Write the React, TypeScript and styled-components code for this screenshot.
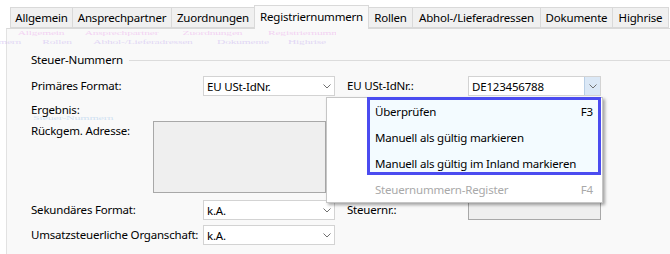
import styled, { createGlobalStyle } from 'styled-components'

const GlobalStyle = createGlobalStyle`
  html, body {
    margin: 0;
    padding: 0;
    background: #ffffff;
  }
  body {
    font-family: 'Noto Sans', 'Segoe UI', sans-serif;
    font-size: 11.5px;
    letter-spacing: -0.2px;
    color: #000000;
  }
`

const Window = styled.div`
  position: relative;
  width: 670px;
  height: 254px;
  overflow: hidden;
  background: #ffffff;
`

const TabStrip = styled.div`
  display: flex;
  align-items: flex-end;
  height: 28px;
  padding-left: 10px;
  box-sizing: border-box;
`

const Tab = styled.div<{ $width: number; $active?: boolean }>`
  position: relative;
  z-index: ${(p) => (p.$active ? 2 : 1)};
  width: ${(p) => p.$width}px;
  height: ${(p) => (p.$active ? 24 : 21)}px;
  margin-left: -1px;
  margin-bottom: ${(p) => (p.$active ? -1 : 0)}px;
  padding-bottom: ${(p) => (p.$active ? 3 : 0)}px;
  box-sizing: border-box;
  display: flex;
  align-items: center;
  justify-content: center;
  white-space: nowrap;
  background: ${(p) => (p.$active ? '#f9f9f9' : '#f0f0f0')};
  border: 1px solid #d9d9d9;
  border-bottom: ${(p) => (p.$active ? 'none' : '1px solid #d9d9d9')};
  &:first-child {
    margin-left: 0;
  }
`

const GhostRow = styled.div<{ $top: number; $shift: number; $color: string }>`
  position: absolute;
  top: ${(p) => p.$top}px;
  left: 0;
  width: 336px;
  height: 12px;
  overflow: hidden;
  pointer-events: none;
  & > div {
    display: flex;
    margin-left: ${(p) => p.$shift}px;
    padding-left: 10px;
    transform: scaleY(0.55);
    transform-origin: top left;
    color: ${(p) => p.$color};
    font-family: 'Liberation Serif', serif;
  }
`

const GhostLabel = styled.span<{ $width: number }>`
  width: ${(p) => p.$width - 1}px;
  flex: none;
  text-align: center;
  white-space: nowrap;
`

const Panel = styled.div`
  margin-left: 6px;
  height: 226px;
  box-sizing: border-box;
  background: #f9f9f9;
  border-top: 1px solid #d9d9d9;
  border-left: 1px solid #e2e2e2;
  padding: 22px 0 0 24px;
`

const GroupHeader = styled.div`
  display: flex;
  align-items: center;
  height: 16px;
  gap: 6px;
  &::after {
    content: '';
    flex: 1;
    height: 1px;
    margin-top: 3px;
    background: #dcdcdc;
  }
`

const FieldRow = styled.div<{ $top: number }>`
  display: grid;
  grid-template-columns: 172px 132px 133px 133px;
  align-items: center;
  height: 20px;
  margin-top: ${(p) => p.$top}px;
`

const Label = styled.div<{ $indent?: number }>`
  padding-left: ${(p) => p.$indent ?? 0}px;
  white-space: nowrap;
  line-height: 16px;
`

const Combo = styled.div`
  display: flex;
  align-items: stretch;
  height: 20px;
  box-sizing: border-box;
  background: #ffffff;
  border: 1px solid #d3d3d3;
`

const ComboText = styled.div`
  flex: 1;
  padding-left: 3px;
  display: flex;
  align-items: center;
  white-space: nowrap;
`

const ComboButton = styled.div<{ $hot?: boolean }>`
  width: 15px;
  display: flex;
  align-items: center;
  justify-content: center;
  background: ${(p) => (p.$hot ? '#dbe8f6' : 'transparent')};
  border-left: 1px solid ${(p) => (p.$hot ? '#b9cfe6' : 'transparent')};
`

const ReadonlyBox = styled.div<{ $width: number; $height: number }>`
  width: ${(p) => p.$width}px;
  height: ${(p) => p.$height}px;
  box-sizing: border-box;
  background: #efefef;
  border: 1px solid #a8a8a8;
`

const ResultRow = styled.div`
  margin-top: 6px;
  height: 16px;
  display: flex;
  align-items: center;
`

const AddressRow = styled.div`
  display: grid;
  grid-template-columns: 122px 173px;
  margin-top: 3px;
  & > ${Label} {
    padding-top: 2px;
  }
`

const GhostText = styled.div`
  position: absolute;
  top: 114px;
  left: 33px;
  font-family: 'Liberation Serif', serif;
  font-size: 12px;
  transform: scaleY(0.5);
  transform-origin: top left;
  color: rgba(190, 215, 240, 0.7);
  pointer-events: none;
`

const Menu = styled.div`
  position: absolute;
  left: 326px;
  top: 97px;
  width: 277px;
  height: 106px;
  box-sizing: border-box;
  background: #ffffff;
  border: 1px solid #c6c6c6;
  box-shadow: 2px 2px 3px rgba(0, 0, 0, 0.35);
`

const MenuItem = styled.div<{ $disabled?: boolean }>`
  position: relative;
  display: flex;
  align-items: center;
  justify-content: space-between;
  height: 26px;
  padding: 0 9px 0 48px;
  color: ${(p) => (p.$disabled ? '#a9a9a9' : '#000000')};
  white-space: nowrap;
`

const Highlight = styled.div`
  position: absolute;
  left: 40px;
  top: -1px;
  width: 234px;
  height: 78px;
  box-sizing: border-box;
  border: 3px solid #4b4cf0;
  pointer-events: none;
`

const HighlightFill = styled.div`
  position: absolute;
  left: 43px;
  top: 2px;
  width: 228px;
  height: 72px;
  background: #f3fbff;
`

const Chevron = () => (
  <svg width="8" height="5" viewBox="0 0 8 5">
    <path d="M0.5 0.5 L4 4 L7.5 0.5" fill="none" stroke="#707070" strokeWidth="1" />
  </svg>
)

const tabs = [
  { label: 'Allgemein', width: 63 },
  { label: 'Ansprechpartner', width: 100 },
  { label: 'Zuordnungen', width: 84 },
  { label: 'Registriernummern', width: 115, active: true },
  { label: 'Rollen', width: 45 },
  { label: 'Abhol-/Lieferadressen', width: 129 },
  { label: 'Dokumente', width: 73 },
  { label: 'Highrise', width: 57 },
]

const menuItems = [
  { label: 'Überprüfen', key: 'F3' },
  { label: 'Manuell als gültig markieren' },
  { label: 'Manuell als gültig im Inland markieren' },
  { label: 'Steuernummern-Register', key: 'F4', disabled: true },
]

const Ghost = ({ top, shift, color }: { top: number; shift: number; color: string }) => (
  <GhostRow $top={top} $shift={shift} $color={color}>
    <div>
      {tabs.map((t) => (
        <GhostLabel key={t.label} $width={t.width}>
          {t.label}
        </GhostLabel>
      ))}
    </div>
  </GhostRow>
)

const App = () => {
  return (
    <Window>
      <GlobalStyle />
      <TabStrip>
        {tabs.map((t) => (
          <Tab key={t.label} $width={t.width} $active={t.active}>
            {t.label}
          </Tab>
        ))}
      </TabStrip>
      <Panel>
        <GroupHeader>Steuer-Nummern</GroupHeader>
        <FieldRow $top={9}>
          <Label>Primäres Format:</Label>
          <Combo>
            <ComboText>EU USt-IdNr.</ComboText>
            <ComboButton>
              <Chevron />
            </ComboButton>
          </Combo>
          <Label $indent={12}>EU USt-IdNr.:</Label>
          <Combo>
            <ComboText>DE123456788</ComboText>
            <ComboButton $hot>
              <Chevron />
            </ComboButton>
          </Combo>
        </FieldRow>
        <ResultRow>
          <Label>Ergebnis:</Label>
        </ResultRow>
        <AddressRow>
          <Label>Rückgem. Adresse:</Label>
          <ReadonlyBox $width={173} $height={72} />
        </AddressRow>
        <FieldRow $top={7}>
          <Label>Sekundäres Format:</Label>
          <Combo>
            <ComboText>k.A.</ComboText>
            <ComboButton>
              <Chevron />
            </ComboButton>
          </Combo>
          <Label $indent={12}>Steuernr.:</Label>
          <ReadonlyBox $width={133} $height={20} />
        </FieldRow>
        <FieldRow $top={5}>
          <Label>Umsatzsteuerliche Organschaft:</Label>
          <Combo>
            <ComboText>k.A.</ComboText>
            <ComboButton>
              <Chevron />
            </ComboButton>
          </Combo>
        </FieldRow>
      </Panel>

      <Ghost top={29} shift={0} color="rgba(236, 170, 236, 0.5)" />
      <Ghost top={38} shift={-333} color="rgba(200, 180, 240, 0.5)" />
      <GhostText>Steuer-Nummern</GhostText>

      <Menu>
        <HighlightFill />
        {menuItems.map((m) => (
          <MenuItem key={m.label} $disabled={m.disabled}>
            <span>{m.label}</span>
            {m.key && <span>{m.key}</span>}
          </MenuItem>
        ))}
        <Highlight />
      </Menu>
    </Window>
  )
}

export default App
